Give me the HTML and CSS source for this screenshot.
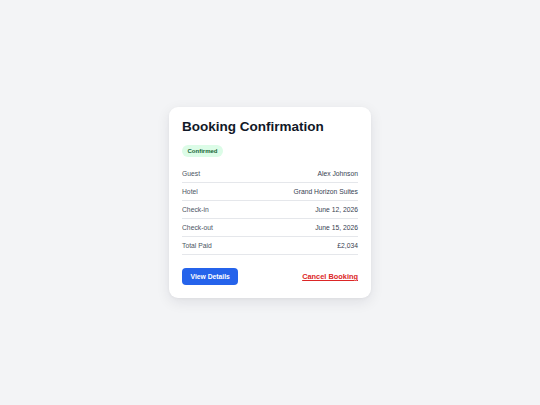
FILE: index.html
```html
<!DOCTYPE html>
<html lang="en">
<head>
<meta charset="utf-8">
<title>Booking Confirmation</title>
<link rel="stylesheet" href="styles.css">
</head>
<body>
  <main class="card">
    <h1 class="title">Booking Confirmation</h1>
    <span class="badge">Confirmed</span>
    <dl class="details">
      <div class="row"><dt>Guest</dt><dd>Alex Johnson</dd></div>
      <div class="row"><dt>Hotel</dt><dd>Grand Horizon Suites</dd></div>
      <div class="row"><dt>Check-in</dt><dd>June 12, 2026</dd></div>
      <div class="row"><dt>Check-out</dt><dd>June 15, 2026</dd></div>
      <div class="row"><dt>Total Paid</dt><dd>£2,034</dd></div>
    </dl>
    <div class="actions">
      <button class="btn-primary" type="button">View Details</button>
      <a class="link-danger" href="#">Cancel Booking</a>
    </div>
  </main>
</body>
</html>
```

FILE: styles.css
```css
* { box-sizing: border-box; }
html, body { margin: 0; padding: 0; }
body {
  min-height: 100vh;
  background: #f3f4f6;
  font-family: "Liberation Sans", Arial, Helvetica, sans-serif;
  display: flex;
  align-items: center;
  justify-content: center;
}
.card {
  width: 202px;
  background: #ffffff;
  border-radius: 9px;
  padding: 11px 13px 13px;
  box-shadow: 0 4px 14px rgba(17, 24, 39, 0.09), 0 1px 3px rgba(17, 24, 39, 0.04);
}
.title {
  margin: 0;
  font-size: 13.5px;
  line-height: 18px;
  font-weight: 700;
  color: #111827;
}
.badge {
  display: inline-block;
  margin-top: 9px;
  padding: 0 5.5px;
  height: 12px;
  line-height: 12px;
  border-radius: 6px;
  background: #dcfce7;
  color: #166534;
  font-size: 6px;
  font-weight: 700;
}
.details {
  margin: 8px 0 0;
}
.row {
  display: flex;
  justify-content: space-between;
  align-items: center;
  height: 18px;
  border-bottom: 1px solid #e5e7eb;
  font-size: 6.75px;
}
.row dt { color: #4b5563; }
.row dd { margin: 0; color: #374151; }
.actions {
  margin-top: 13px;
  display: flex;
  justify-content: space-between;
  align-items: center;
}
.btn-primary {
  border: 0;
  background: #2563eb;
  color: #ffffff;
  font-family: inherit;
  font-size: 6.75px;
  font-weight: 700;
  height: 17px;
  padding: 0 8.5px;
  border-radius: 4px;
}
.link-danger {
  color: #dc2626;
  font-size: 7.4px;
  font-weight: 700;
  text-decoration: underline;
}
```
